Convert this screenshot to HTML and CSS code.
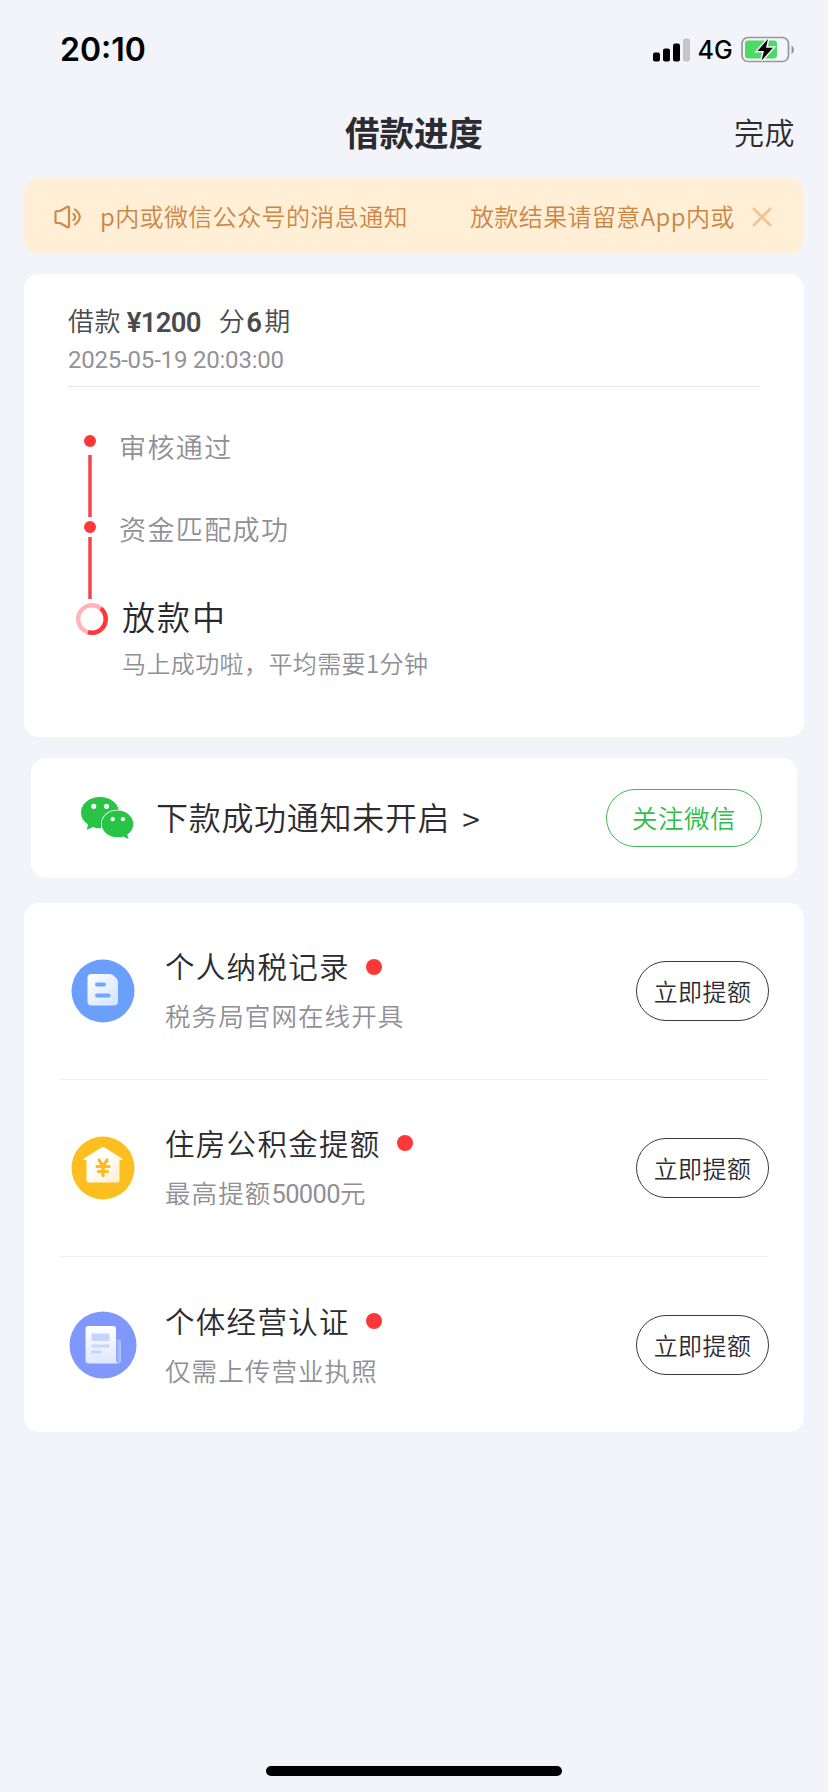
FILE: index.html
```html
<!DOCTYPE html>
<html lang="zh-CN">
<head>
<meta charset="utf-8">
<title>借款进度</title>
<link rel="stylesheet" href="styles.css">
</head>
<body>
<div class="screen">
  <header class="status">
    <span class="clock">20:10</span>
    <div class="indicators">
      <svg class="signal" width="38" height="24" viewBox="0 0 38 24"><rect x="0" y="14.500" width="7" height="9" rx="2"/><rect x="10" y="10.500" width="7" height="13" rx="2"/><rect x="20" y="5.500" width="7" height="18" rx="2"/><rect x="30" y="0.500" width="7" height="23" rx="2" fill="#c4c5ca"/></svg>
      <span class="network">4G</span>
      <svg class="battery" width="54" height="28" viewBox="0 0 54 28"><rect x="1" y="1.500" width="46.500" height="24" rx="6" fill="none" stroke="#96979c" stroke-width="1.700"/><path d="M50.500 9.500c3.300 1.500 3.300 7 0 8.500z" fill="#96979c"/><rect x="4" y="4.500" width="32" height="18" rx="3" fill="#4cd964"/><path d="M27 3L16.500 15h6.500l-2.500 9.500L32 11.800h-7z" fill="#000" stroke="#f3f4f9" stroke-width="3" paint-order="stroke"/></svg>
    </div>
  </header>

  <nav class="nav">
    <h1 class="nav-title">借款进度</h1>
    <a class="nav-done">完成</a>
  </nav>

  <div class="notice">
    <svg class="speaker" width="28" height="24" viewBox="0 0 28 24" fill="none" stroke="#d08b4b" stroke-width="2.200" stroke-linejoin="round" stroke-linecap="round"><path d="M1.500 7.500q0-1.500 1.500-1.500H6l7-4q2-1 2 1v18q0 2-2 1L6 18H3q-1.500 0-1.500-1.500z"/><path d="M19.500 9q3.500 3 0 6M21 4.500q9.500 7.500 0 15"/></svg>
    <div class="marquee"><span>p内或微信公众号的消息通知</span><span>放款结果请留意App内或</span></div>
    <svg class="close" width="20" height="20" viewBox="0 0 20 20" stroke="#f0c496" stroke-width="2.800" stroke-linecap="round"><path d="M2 2l16 16M18 2L2 18"/></svg>
  </div>

  <section class="card progress">
    <div class="loan"><span>借款</span><b class="amount">¥1200</b><span class="term">分</span><b class="count">6</b><span>期</span></div>
    <time class="date">2025-05-19 20:03:00</time>
    <div class="steps">
      <svg class="track" width="34" height="205" viewBox="0 0 34 205"><g fill="#fe3838"><circle cx="14" cy="8" r="6"/><circle cx="14" cy="94" r="6"/></g><path d="M14 22v62M14 104v62" stroke="#f0484a" stroke-width="3.500"/><circle cx="16" cy="186" r="13.800" fill="none" stroke="#ffb5b7" stroke-width="4.400"/><path d="M24.800 175.400A13.800 13.800 0 0 1 12 199.200" fill="none" stroke="#fe3838" stroke-width="4.400"/></svg>
      <div class="labels">
        <div class="step">审核通过</div>
        <div class="step">资金匹配成功</div>
        <div class="current">放款中</div>
        <div class="hint">马上成功啦，平均需要1分钟</div>
      </div>
    </div>
  </section>

  <section class="card wechat">
    <svg class="wechat-icon" width="54" height="42" viewBox="0 0 54 42"><path d="M19 0C8.500 0 0 6.800 0 15.500c0 5 2.700 9 7 12L5.800 33l6-3c2.300.8 4.700 1.200 7.200 1.200C29.500 31.200 38 24.300 38 15.500S29.500 0 19 0z" fill="#28c445"/><path d="M36.500 13.500C27.700 13.500 20.700 19.400 20.700 27S27.700 40.300 36.500 40.300c2 0 4-.3 5.700-.9L47.500 42l-1.200-4.500c3.800-2.500 6-6.200 6-10.500 0-7.600-7-13.500-15.800-13.500z" fill="#28c445" stroke="#fff" stroke-width="1.600" paint-order="stroke"/><g fill="#fff"><circle cx="12.700" cy="9.300" r="2.600"/><circle cx="25.500" cy="9.300" r="2.600"/><circle cx="31.700" cy="22.200" r="2.100"/><circle cx="42" cy="22.200" r="2.100"/></g></svg>
    <span class="wechat-text">下款成功通知未开启</span><span class="arrow">&gt;</span>
    <button class="follow">关注微信</button>
  </section>

  <section class="card offers">
    <article class="offer">
      <svg class="offer-icon" width="68" height="68" viewBox="0 0 68 68"><defs><linearGradient id="paper" x1="0" y1="0" x2="1" y2="1"><stop offset="0" stop-color="#fff"/><stop offset="1" stop-color="#d2e3ff"/></linearGradient></defs><circle cx="34" cy="34" r="31.500" fill="#6a9ffc"/><path d="M22.500 17H41q2 0 3.500 1.500l3 3Q49 23 49 25v19.500q0 4-4 4H22.500q-4 0-4-4V21q0-4 4-4z" fill="url(#paper)"/><rect x="26" y="25.500" width="11" height="4" rx="2" fill="#76a6fa"/><rect x="26" y="36.500" width="15.500" height="4" rx="2" fill="#76a6fa"/></svg>
      <div class="offer-text"><h2 class="offer-title">个人纳税记录<i class="dot"></i></h2><p class="offer-sub">税务局官网在线开具</p></div>
      <button class="raise">立即提额</button>
    </article>
    <article class="offer">
      <svg class="offer-icon" width="68" height="68" viewBox="0 0 68 68"><defs><linearGradient id="house" x1="0" y1="0" x2="1" y2="1"><stop offset=".4" stop-color="#fff"/><stop offset="1" stop-color="#ffeccb"/></linearGradient></defs><circle cx="34" cy="34" r="31.500" fill="#fdbe20"/><path d="M32.500 13.500q1.500-1 3 0L53 24.500q1.500 1.500-.5 1.500h-2v20.500q0 2-2 2h-29q-2 0-2-2V26h-2q-2 0-.5-1.500z" fill="url(#house)"/><path d="M30 26l4 6.500 4-6.500M34 33v8.500M28 32.500h12M29.500 37.500h9" fill="none" stroke="#fdba20" stroke-width="3.200" stroke-linecap="round"/></svg>
      <div class="offer-text"><h2 class="offer-title">住房公积金提额<i class="dot"></i></h2><p class="offer-sub">最高提额<span class="figure">50000</span>元</p></div>
      <button class="raise">立即提额</button>
    </article>
    <article class="offer">
      <svg class="offer-icon" width="68" height="68" viewBox="0 0 68 68"><defs><linearGradient id="sheet" x1="0" y1="0" x2="0" y2="1"><stop offset="0" stop-color="#fff"/><stop offset="1" stop-color="#dfe7ff"/></linearGradient><linearGradient id="curl" x1="0" y1="0" x2="1" y2="0"><stop offset="0" stop-color="#6d8ef5"/><stop offset="1" stop-color="#b5c8ff"/></linearGradient></defs><circle cx="34" cy="34" r="33.500" fill="#8097fb"/><path d="M45 28.500h4q3 0 3 3V49q0 4-4 4h-4z" fill="url(#curl)"/><path d="M19.500 15H44q3 0 3 3v31q0 3 2 3.500H20q-3.500 0-3.500-3.500V18q0-3 3-3z" fill="url(#sheet)"/><g fill="#c6d5fb"><rect x="22.500" y="22.500" width="18" height="7.500"/><rect x="22.500" y="33.500" width="18" height="3"/><rect x="22.500" y="39.500" width="10" height="3"/></g></svg>
      <div class="offer-text"><h2 class="offer-title">个体经营认证<i class="dot"></i></h2><p class="offer-sub">仅需上传营业执照</p></div>
      <button class="raise">立即提额</button>
    </article>
  </section>
  <div class="home-bar"></div>
</div>
</body>
</html>
```
FILE: styles.css
```css
* { box-sizing: border-box; margin: 0; padding: 0; }
body {
  background: #f3f4f9;
  color: #2b2b30;
  font-family: "Noto Sans CJK SC", sans-serif;
  font-weight: 350;
}
button { font: inherit; background: none; color: inherit; white-space: nowrap; }
svg { display: block; flex: none; }

.screen { width: 828px; height: 1792px; display: flex; flex-direction: column; overflow: hidden; }

.status {
  height: 100px;
  padding: 0 33px 0 60px;
  display: flex;
  align-items: center;
  justify-content: space-between;
  color: #000;
  font-family: Inter, sans-serif;
}
.clock { font-size: 32px; font-weight: 600; line-height: 40px; }
.indicators { display: flex; align-items: center; }
.network { font-size: 25px; font-weight: 500; line-height: 30px; margin: 0 8px 0 7px; letter-spacing: 0.200px; }

.nav {
  height: 78px;
  padding: 0 33px;
  display: grid;
  grid-template-columns: 1fr auto 1fr;
  align-items: start;
}
.nav-title { grid-column: 2; font-size: 34.500px; font-weight: 700; line-height: 62px; }
.nav-done { justify-self: end; font-size: 30px; line-height: 63px; letter-spacing: 0.500px; }

.notice {
  height: 76px;
  margin: 0 24px;
  padding: 0 32px 0 30px;
  display: flex;
  align-items: center;
  border-radius: 15px;
  background: #ffefd7;
  color: #cb8646;
}
.speaker, .close { margin-top: 2px; }
.marquee {
  width: 636px;
  margin: 0 16px 0 18px;
  display: flex;
  gap: 62px;
  overflow: hidden;
  white-space: nowrap;
  font-size: 24px;
  line-height: 40px;
  letter-spacing: 0.400px;
}

.card { margin: 0 24px; border-radius: 15px; background: #fff; }

.progress { height: 463px; margin-top: 20px; padding: 27px 44px 0; }
.loan { display: flex; align-items: center; height: 38px; font-size: 26px; line-height: 38px; letter-spacing: 0.400px; color: #4a4a4d; }
.amount, .count { font-family: Roboto, sans-serif; font-weight: 600; font-size: 27.500px; letter-spacing: -0.700px; }
.amount { margin: 5px 18px 0 6px; }
.count { margin: 5px 3px 0 1px; }
.date { display: block; height: 48px; border-bottom: 1px solid #e8e8eb; color: #929297; font-family: Roboto, sans-serif; font-size: 24px; font-weight: 400; line-height: 42px; letter-spacing: -0.200px; }
.steps { display: flex; gap: 9px; padding: 46px 0 0 8px; }
.labels { margin-top: -4px; color: #8f8f95; }
.step { font-size: 27px; line-height: 36px; letter-spacing: 1.400px; }
.step + .step { margin-top: 46px; }
.current { margin: 45px 0 0 3px; font-size: 33px; line-height: 48px; letter-spacing: 2px; color: #29292d; }
.hint { margin: 7px 0 0 3px; font-size: 24px; line-height: 32px; letter-spacing: 0.400px; }

.wechat { height: 120px; margin: 21px 31px 0; padding: 0 35px 0 50px; display: flex; align-items: center; }
.wechat-text { margin: 0 0 4px 21px; font-size: 32px; letter-spacing: 0.700px; line-height: 48px; }
.arrow { margin-left: 12px; font-size: 32px; line-height: 48px; }
.follow { width: 156px; height: 58px; margin-left: auto; padding-bottom: 3px; border: 1px solid #3dba58; border-radius: 29px; color: #2fbe4c; font-size: 25.500px; letter-spacing: 0.500px; }

.offers { height: 529px; margin-top: 25px; padding: 0 35px 0 36px; }
.offer { height: 177px; display: flex; align-items: center; }
.offer:first-child { height: 176px; }
.offer + .offer { border-top: 1px solid #f0f0f2; }
.offer-icon { margin-left: 9px; }
.offer-text { margin: 0 0 4px 28px; }
.offer:first-child .offer-text { margin-bottom: 5px; }
.offer-title { display: flex; align-items: center; font-size: 29.500px; font-weight: 350; line-height: 44px; letter-spacing: 1.300px; }
.dot { width: 16px; height: 16px; margin: 3px 0 0 16px; border-radius: 50%; background: #fe3838; }
.offer-sub { margin-top: 9px; font-size: 25.500px; line-height: 38px; letter-spacing: 1.100px; color: #8f8f95; }
.figure { font-family: Roboto, sans-serif; font-weight: 400; letter-spacing: -0.600px; }
.raise { width: 133px; height: 60px; margin-left: auto; padding-bottom: 2px; border: 1px solid #39393c; border-radius: 30px; font-size: 24px; letter-spacing: 0.400px; }

.home-bar { width: 296px; height: 10px; margin: auto auto 16px; border-radius: 5px; background: #000; }
```
